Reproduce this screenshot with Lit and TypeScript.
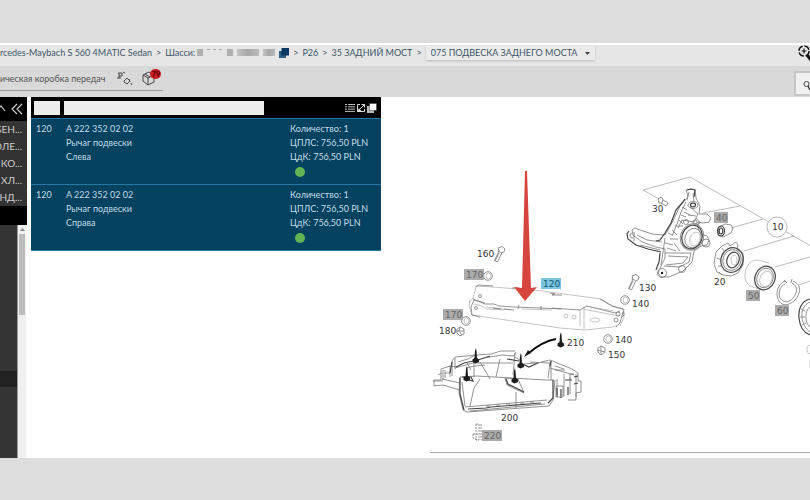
import { LitElement, html, svg, css } from "lit";
import { customElement } from "lit/decorators.js";

interface Part {
  pos: string;
  no: string;
  name: string;
  side: string;
}

const parts: Part[] = [
  { pos: "120", no: "A 222 352 02 02", name: "Рычаг подвески", side: "Слева" },
  { pos: "120", no: "A 222 352 02 02", name: "Рычаг подвески", side: "Справа" },
];

const groups = ["БЕН...", "ОЛЕ...", "КО...", "ХЛ...", "НД..."];

@customElement("parts-list")
class PartsList extends LitElement {
  static styles = css`
    :host { display: block; color: #c3dce8; font-size: 9px; line-height: 14px; }
    .head { display: flex; align-items: center; gap: 4px; height: 21px; padding: 0 4px 0 3px; background: #000; }
    input { box-sizing: border-box; height: 14px; margin: 0; padding: 0 3px; border: 0; border-radius: 0; background: #ededed; font: inherit; color: #222; }
    .pos { width: 26px; }
    .query { flex: 1; min-width: 0; }
    .tools { display: flex; gap: 1px; padding-left: 77px; }
    button { display: flex; padding: 0; border: 0; background: none; }
    svg { display: block; width: 10px; height: 10px; }
    ul { margin: 0; padding: 0; list-style: none; border-bottom: 1px solid #2b7ba0; }
    li { box-sizing: border-box; display: grid; grid-template-columns: 30px 1fr 90px; min-height: 66px; padding: 3px 1px 3px 5px; background: #04425f; border-top: 1px solid #2379a3; }
    .dot { width: 10px; height: 10px; margin: 3px 0 0 5px; border-radius: 50%; background: #63b354; }
  `;

  render() {
    return html`
      <div class="head">
        <input class="pos" aria-label="Позиция" />
        <input class="query" aria-label="Поиск" />
        <div class="tools">
          <button aria-label="Список">
            <svg viewBox="0 0 10 10" stroke="#bbb" fill="none"><path d="M0 1.5h2M3 1.5h7M0 3.8h2M3 3.8h7M0 6.1h2M3 6.1h7M0 8.4h10" /></svg>
          </button>
          <button aria-label="Развернуть">
            <svg viewBox="0 0 10 10" stroke="#ddd" fill="none"><path d="M4 1.5H1.5v7h7V6M1.5 8.5 8.5 1.5M5.5 1.5h3v3M3 5.5v2h2" /></svg>
          </button>
          <button aria-label="Копировать">
            <svg viewBox="0 0 10 10"><path d="M0 3h7v7H0z" fill="#bbb" /><path d="M2.5.5h7v7h-7z" fill="#fff" stroke="#333" stroke-width=".5" /></svg>
          </button>
        </div>
      </div>
      <ul>
        ${parts.map(
          (p) => html`<li>
            <div>${p.pos}</div>
            <div><div>${p.no}</div><div>${p.name}</div><div>${p.side}</div></div>
            <div>
              <div>Количество: 1</div><div>ЦПЛС: 756,50 PLN</div><div>ЦдК: 756,50 PLN</div>
              <div class="dot"></div>
            </div>
          </li>`
        )}
      </ul>
    `;
  }
}

interface Callout {
  t: string;
  x: number;
  y: number;
  kind?: "grey" | "blue";
}

const callouts: Callout[] = [
  { t: "30", x: 652, y: 212 },
  { t: "40", x: 716, y: 221, kind: "grey" },
  { t: "10", x: 772, y: 230 },
  { t: "20", x: 714, y: 285 },
  { t: "50", x: 748, y: 299, kind: "grey" },
  { t: "60", x: 777, y: 314, kind: "grey" },
  { t: "130", x: 639, y: 291 },
  { t: "140", x: 632, y: 307 },
  { t: "140", x: 615, y: 343 },
  { t: "150", x: 608, y: 358 },
  { t: "160", x: 477, y: 257 },
  { t: "170", x: 466, y: 278, kind: "grey" },
  { t: "170", x: 445, y: 318, kind: "grey" },
  { t: "180", x: 439, y: 334 },
  { t: "120", x: 543, y: 287, kind: "blue" },
  { t: "210", x: 567, y: 346 },
  { t: "200", x: 501, y: 421 },
  { t: "220", x: 484, y: 439, kind: "grey" },
];

const stud = (x: number, y: number) => svg`
  <path class="solid" d="M${x} ${y}l-1 3-.5 7-2 1.5v2.5l3 1.5 3.500-1.500v-2.500l-2-1.500-.5-7z" />`;

const bolt = (x: number, y: number) => svg`
  <path class="part" d="M${x} ${y}l4-1.500 3 2.500-1 3-2 .5-4.500 9.500-3-1.500 4.500-9.500z M${x - 0.5} ${y + 3}l4 1.500M${x + 1} ${y + 5}l-4 8" />`;

const nut = (x: number, y: number) => svg`
  <circle class="part" cx=${x} cy=${y} r="4.300" /><ellipse class="faint" cx=${x + 0.5} cy=${y} rx="2.500" ry="3" />`;

@customElement("parts-diagram")
class PartsDiagram extends LitElement {
  static styles = css`
    :host { display: block; }
    svg { display: block; width: 100%; height: auto; }
    text { font-family: "DejaVu Sans", sans-serif; font-size: 9px; fill: #333; }
    .on-grey { fill: #666; }
    .on-blue { fill: #135a77; }
    .grey { fill: #ababab; }
    .blue { fill: #7cc3df; }
    .lead { fill: none; stroke: #aaa; stroke-width: .8; }
    .part { fill: none; stroke: #777; stroke-width: .8; stroke-linejoin: round; }
    .bold { fill: none; stroke: #444; stroke-width: 1.2; }
    .faint { fill: none; stroke: #aaa; stroke-width: .7; }
    .solid { fill: #1c1c1c; }
    .arrow { fill: #d6453d; }
    .swoop { fill: none; stroke: #111; stroke-width: 2; }
    .bubble { fill: #fff; stroke: #aaa; stroke-width: .8; }
    .rule { stroke: #aaa; }
  `;

  render() {
    return html`
      <svg viewBox="381 97 429 361" role="img" aria-label="Подвеска заднего моста">
        <g>
          <path class="lead" d="M643 190 690 177 810 245.500M643 190l16 9M703 213l37-7M731 228l32-9M744 251l50-15M775 267l35-10M799 285l11-4" />
          <circle class="bubble" cx="777" cy="227" r="10" />
        </g>
        <g>
          <path class="part" d="M686 190l6-1 3 1 1 8 4 8-1 8 8 0 4 4-2 4-6 1-5-1 0 6 3 6 6 2 2 4-2 5-6 1-7 5-2 11-9 9-14 6-8 0-3-4 3-7 4-8 0-9-9-2-14-5-9-7-1-5 3-2 5 2 12 4 13 1 3-5 6-11 6-13 8-9z" />
          <path class="bold" d="M687 190l4-1 4 1-1 7M685 199l-3 4-6 7-5 13-6 10-5 7-4 1M629 231l-2 3 1 5 8 6 12 4 13 3M660 253l-1 9-3 8" />
          <path class="part" d="M634 232v9M632 233a2 2 0 1 0 1 5M637 235l10 5 15 2M640 245l20 5M665 238l-2 14-2 13M665 253l26 0-2 9-9 5-16-1M668 256l20 1-5 6-17 2M686 202l-5 10-4 12-5 12M690 207l8 7-4 8-12-2-4 8M681 215l5 2M679 220l4 4M696 218l4 5-5 3M672 230l5 5M670 239l8 0M674 243l6 8M675 226l8 0M689 192l-2 8M693 193l1 9M682 207l5 3M684 212l6 3M688 215l8 1M668 233l4 2M665 243l8 2M667 248l9 3" />
          <circle class="part" cx="662" cy="273" r="4.500" /><circle class="solid" cx="662" cy="273" r="1.200" />
          <circle class="part" cx="682" cy="269" r="3.500" />
          <ellipse class="part" cx="693" cy="205" rx="5" ry="3.500" /><ellipse class="bold" cx="693" cy="205" rx="2.500" ry="1.800" />
          <circle class="part" cx="706" cy="243" r="4" /><circle class="part" cx="686" cy="222" r="2.500" /><circle class="part" cx="695" cy="222" r="2" />
          <ellipse class="bold" cx="692" cy="237" rx="10" ry="12" transform="rotate(20 692 237)" />
          <ellipse class="part" cx="692" cy="237" rx="11.500" ry="13.500" transform="rotate(20 692 237)" />
          <ellipse class="part" cx="693" cy="238" rx="8" ry="10" transform="rotate(20 693 238)" />
          <ellipse class="faint" cx="695" cy="239" rx="5" ry="7" transform="rotate(20 695 239)" />
          <path class="part" d="M658 199l3-2 2 2-1 4-3 0zM663 200l5 3M661 203l5 3 2-3" />
        </g>
        <g>
          <path class="part" d="M719 227l6-3 6 1 2 3-2 5-8 4-5-2z" />
          <ellipse class="bold" cx="721" cy="231" rx="3.500" ry="5" /><ellipse class="bold" cx="721" cy="231" rx="1.800" ry="3" />
          <path class="part" d="M716 252l6-6 6-3 2 3 6-4 2 3-1 5 6 3v12l-5 8-7 3-8-1-6-3-3-8 1-6z" />
          <ellipse class="bold" cx="732" cy="260" rx="11" ry="12.500" transform="rotate(20 732 260)" />
          <ellipse class="part" cx="732" cy="260" rx="9" ry="10.500" transform="rotate(20 732 260)" />
          <ellipse class="bold" cx="733" cy="260" rx="6" ry="8" transform="rotate(20 733 260)" />
          <ellipse class="faint" cx="734" cy="260" rx="3" ry="5" />
          <path class="part" d="M717 258l4 2M718 266l4 0M719 272l3 3M722 248l3 4" />
          <path class="faint" d="M769 263l-12-3c-8 0-13 9-12 18 1 5 4 8 8 9l9 3" />
          <ellipse class="bold" cx="765" cy="278" rx="10" ry="12" transform="rotate(22 765 278)" />
          <ellipse class="part" cx="765" cy="278" rx="8" ry="10" transform="rotate(22 765 278)" />
          <ellipse class="faint" cx="766" cy="279" rx="6" ry="8" transform="rotate(22 766 279)" />
          <path class="part" d="M786 281c-7 1-11 11-8 18 3 8 11 7 17 1 6-7 7-15-2-19M784 280l3 3M792 279l-1 4M785 284c-5 2-7 9-5 14 3 5 9 5 13 0 5-6 5-12-1-15" />
          <path class="bold" d="M810 299c-9 2-12 11-11 19 1 10 5 15 11 17" />
          <path class="part" d="M810 302c-6 2-9 9-8 15 1 8 4 12 8 15M810 307c-5 3-6 16 0 20M801 309l4 2M800 317l5 0M802 325l4-2" />
          <path class="faint" d="M810 345c-4 1-4 8 0 9M810 360v8" />
        </g>
        <g>
          <path class="faint" d="M473 299l3-13 17 1 49 4 59 8 13 8 10 2 0 8-4 9" />
          <path class="part" d="M476 287l2-2 15 1M512 288l7 0M550 293l5 1-3 1 10 0M600 299l12 7 11 3 1 6-3 3M623 312l-3 11-4 4M473 299l12 5 9 0 5 2 15 1 26 1 26 1 14 1 7-4 28 7 5-2" />
          <path class="faint" d="M470 300l-1 6 3 9 88 13 25 2 28-3 5-2M473 298l-4 5M474 304l8 2 4 3 18 1M486 307l25 3M522 309l30 1M584 306v23M580 309v17M583 309l36 7M590 307l24 4" />
          <path class="part" d="M471 307l3-7 11 3M493 308l8 1M504 309l10 1M519 305l-1 4M541 306v4M552 308l9 1M471 307l1 8 8 2" />
          <circle class="part" cx="480" cy="296" r="1.500" /><circle class="part" cx="476" cy="308" r="1.500" /><circle class="part" cx="618" cy="314" r="2" /><circle class="part" cx="616" cy="320" r="2" />
          <circle class="faint" cx="566" cy="316" r="2" /><circle class="faint" cx="574" cy="317" r="2" /><ellipse class="faint" cx="595" cy="320" rx="5" ry="2" />
        </g>
        <g>
          ${bolt(498, 248)}${bolt(632, 276)}
          ${nut(488, 276)}${nut(466, 321)}${nut(625, 300)}${nut(608, 339)}
          <path class="part" d="M457 329l3-2 4 2v5l-4 2-3-3zM460 327l-1 4 3 4M456 331l8 0M598 348l3-2 4 2v4l-4 3-3-3zM601 346l0 8M597 350l8 2" />
        </g>
        <g>
          <path class="part" d="M452 361l3-4 22-2 14-1 10-3 14 0M452 361v15M455 358l0 11M441 369l9-3 6 1M441 369v11l-7 0v6l9-1 17 5M443 370v10M450 366v11M445 373h5M442 379l18 4M455 368l18-5 40 0M460 377l17-1 69 4 8 0M460 377l-1 16 4 17 4 2 82-6 4-6 2-20M467 363l4 7M474 362l0 15M480 362l10 17M500 359l-4 18M515 353l-2 22M515 357l6 4M530 362l20 1-2 15M541 362l9-2 22 9 6 4v8l3 0v11l-5 1v7l-8 0M550 368l24 7M557 379v16M564 374v22M570 377v17M576 374v23M551 361l0 19M505 378l2 7 17 8-6-14z" />
          <path class="part" d="M480 379l-6 9-4 18M516 392l0 16M462 382l3 24M465 407l82-7M470 411l75-7" />
          <path class="bold" d="M460 378v16l4 16M553 380v18l-5 5M468 409l18-1 5-1 50-4M506 379l2 5 16 8M452 362l-2 11M456 367l8-4 14-3 12-4M507 359l12 2M520 363l9 4 9-4M551 361l-1 5M574 384l4-1M565 380l7 0M557 388v9M561 389v9M568 387v8M574 377l4-1M462 377h9l2 4-8-2" />
          <path class="part" d="M458 362l10-3 7-4M466 368l9-2 10-1M484 358l18-3 12 1 2-4M523 364l16-1M555 366l9 3M556 386h7v11h-7zM433 381h10M438 375l4-2M445 370v8M555 370h10M570 380v-6l4 0M486 406l4 0M496 405l4 0M506 404l4 0M520 403l4 0M530 402l4 0" />
          ${stud(476, 348)}${stud(521, 353)}${stud(467, 366)}${stud(515, 368)}${stud(561, 332)}
          <path class="swoop" d="M556 339c-11 2-19 7-27 14" />
          <path class="solid" d="M524 357l4-7 3 3z" />
          <path class="part" d="M476 424h3v16h-3zM473 434h5M473 434v4l5 2M481 424v16" stroke-dasharray="2 1" />
        </g>
        ${callouts.map((c) => {
          const w = c.t.length * 6 + 2;
          return svg`
            ${c.kind ? svg`<rect class=${c.kind} x=${c.x - 2} y=${c.y - 9} width=${w} height="11" />` : null}
            <text class=${c.kind ? "on-" + c.kind : ""} x=${c.x} y=${c.y}>${c.t}</text>`;
        })}
        <path class="arrow" d="M525 171l2 0 4 117 6-1-12 14-11-14 8 1z" />
        <path class="rule" d="M430 452.500h380" />
      </svg>
    `;
  }
}

@customElement("app-root")
class AppRoot extends LitElement {
  static styles = css`
    :host { display: block; overflow: hidden; min-height: 100vh; padding-top: 43px; box-sizing: border-box; background: #ddd; font-family: Lato, "Open Sans", sans-serif; color: #4a5a66; }
    nav { display: flex; align-items: center; gap: 4px; height: 15px; padding-bottom: 6px; border-top: 2px solid #fff; background: #e6e6e6; font-size: 9px; line-height: 11px; white-space: nowrap; }
    nav a { text-decoration: none; }
    nav a, .chassis { color: #3d5569; }
    .chassis { display: flex; align-items: center; gap: 2px; }
    .mask { display: flex; align-items: center; gap: 4px; padding-right: 2px; }
    .mask i { height: 7px; width: 22px; background: linear-gradient(90deg, #c4c4c4, #a6a6a6 50%, #bbb); }
    .mask .small { width: 6px; background: #b0b0b0; }
    .mask .mid { width: 12px; }
    .mask .dash { width: 16px; height: 1px; margin-bottom: 7px; background: repeating-linear-gradient(90deg, #aaa 0 3px, transparent 3px 6px); }
    .copy { display: block; width: 10px; height: 10px; }
    .node { position: relative; display: flex; box-shadow: 0 1px 2px #bbb; background: #ebebeb; }
    select { appearance: none; height: 14px; margin: 0; padding: 0 17px 0 5px; border: 0; background: none; font: inherit; color: #3d5569; }
    .caret { position: absolute; right: 5px; top: 6px; width: 5px; height: 3px; pointer-events: none; }
    .bare { display: flex; align-self: flex-start; margin: 0 -2px 0 auto; padding: 0; border: 0; background: none; }
    .bare svg { width: 14px; height: 16px; }
    .bar { display: flex; align-items: flex-start; height: 31px; background: #d9d9d9; font-size: 9px; }
    .gear { display: flex; align-items: center; gap: 8px; height: 24px; padding-right: 2px; border-bottom: 1px solid #999; color: #555; white-space: nowrap; }
    .gear span:first-child { padding-right: 4px; }
    .gear svg { display: block; width: 16px; height: 16px; }
    .cart { position: relative; display: flex; padding: 0; border: 0; background: none; font-family: inherit; }
    .gear .cart svg { width: 20px; }
    .badge { position: absolute; right: 0; top: -1px; width: 11px; border-radius: 5px; background: #c81e24; color: #4a0000; font-size: 7px; font-weight: 700; line-height: 10px; text-align: center; }
    .find { box-sizing: border-box; display: flex; align-items: center; width: 24px; height: 25px; margin: 5px -8px 0 auto; padding: 3px 0 0 7px; border: 2px solid #c6c6c6; background: #f0f0f0; }
    .find svg { width: 9px; height: 11px; flex: none; }
    main { display: grid; grid-template-columns: 27px minmax(0, 354px) minmax(0, 1fr); background: #fff; }
    parts-list { align-self: start; margin-left: 4px; }
    aside { display: flex; flex-direction: column; background: #000; color: #ccc; font-size: 10px; }
    .fold { display: flex; justify-content: flex-end; height: 24px; padding: 0 4px 0 0; border: 0; background: #000; align-items: center; overflow: hidden; }
    .fold svg { width: 23px; height: 14px; flex: none; }
    .groups { margin: 0 0 19px; padding: 0; list-style: none; background: #333; }
    .groups li { display: flex; justify-content: flex-end; height: 17px; padding-right: 5px; overflow: hidden; line-height: 16px; }
    .tree { flex: 1; display: grid; grid-template-columns: 1fr 9px; background: #353535; border-right: 1px solid #fff; }
    .rows { padding-top: 146px; }
    .rows div { height: 16px; background: #222; }
    .scroll { padding: 0 1px; background: #f0f0f0; border-left: 1px solid #999; }
    .scroll svg { display: block; width: 7px; height: 9px; }
    .thumb { height: 81px; background: #bcbcbc; }
  `;

  render() {
    return html`
      <nav aria-label="Навигация">
        <a href="#">rcedes-Maybach S 560 4MATIC Sedan</a><span>&gt;</span>
        <span class="chassis">Шасси:
          <span class="mask"><i class="small"></i><i class="dash"></i><i class="small"></i><i></i><i class="mid"></i></span>
          <svg class="copy" viewBox="0 0 10 10"><path d="M0 3h7v7H0z" fill="#345b7c" /><path d="M2.500 0H10v7.500H2.500z" fill="#0b3763" /></svg>
        </span><span>&gt;</span>
        <a href="#">P26</a><span>&gt;</span>
        <a href="#">35 ЗАДНИЙ МОСТ</a><span>&gt;</span>
        <div class="node">
          <select aria-label="Узел"><option>075 ПОДВЕСКА ЗАДНЕГО МОСТА</option></select>
          <svg class="caret" viewBox="0 0 5 3"><path d="M0 0h5L2.500 3z" fill="#444" /></svg>
        </div>
        <button class="bare" aria-label="Увеличить">
          <svg viewBox="0 0 14 16" fill="none" stroke="#111"><circle cx="6" cy="6" r="5" stroke-width="1.500" stroke-dasharray="6 1.800" /><path d="M3.500 6h5M6 3.500v5" stroke-width="1.200" /><path d="M9 10l4 5" stroke-width="3" /></svg>
        </button>
      </nav>
      <div class="bar">
        <div class="gear">
          <span>ическая коробка передач</span>
          <svg viewBox="0 0 16 16" fill="none" stroke="#444"><path d="M1 3h4M2 3v5M5 3v3H2M0 8h4M6 2l2 1M7 11l3-3 3 3-3 3-3-2zM12 9l1 3M14 13l1 2" /></svg>
          <button class="cart" aria-label="Корзина">
            <svg viewBox="0 0 20 16" fill="none" stroke="#444"><path d="M2 5l6-3 5 3-6 3zM2 5v6l5 4V8M7 15l6-3V5M4 4l5 3" /></svg>
            <span class="badge">79</span>
          </button>
        </div>
        <button class="find" aria-label="Поиск">
          <svg viewBox="0 0 9 11" fill="none" stroke="#444"><circle cx="3.500" cy="4" r="2.500" /><path d="M5 6l2 4" stroke-width="1.500" /></svg>
        </button>
      </div>
      <main>
        <aside>
          <button class="fold" aria-label="Свернуть">
            <svg viewBox="0 0 23 14" fill="none" stroke="#ccc" stroke-width="1.200"><path d="M-4 9l5-5 4 5M17 2l-5 5 5 5M22 2l-5 5 5 5" /></svg>
          </button>
          <ul class="groups">${groups.map((g) => html`<li>${g}</li>`)}</ul>
          <div class="tree">
            <div class="rows"><div></div></div>
            <div class="scroll">
              <svg viewBox="0 0 7 9"><path d="M1 6l2.500-3L6 6z" fill="#888" /></svg>
              <div class="thumb"></div>
            </div>
          </div>
        </aside>
        <parts-list></parts-list>
        <parts-diagram></parts-diagram>
      </main>
    `;
  }
}
